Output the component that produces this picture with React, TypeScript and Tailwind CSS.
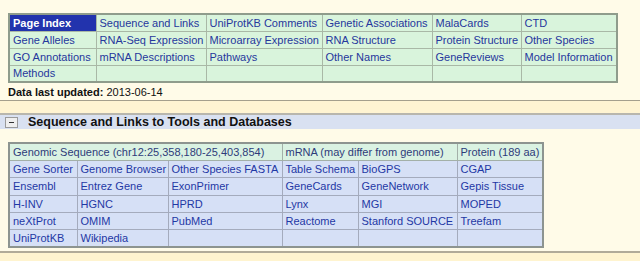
import React from "react";

const indexRows: string[][] = [
    ["Page Index", "Sequence and Links", "UniProtKB Comments", "Genetic Associations", "MalaCards", "CTD"],
    ["Gene Alleles", "RNA-Seq Expression", "Microarray Expression", "RNA Structure", "Protein Structure", "Other Species"],
    ["GO Annotations", "mRNA Descriptions", "Pathways", "Other Names", "GeneReviews", "Model Information"],
    ["Methods", "", "", "", "", ""],
];

const indexCols = [87, 110, 116, 110, 89, 96];

const linkRows: string[][] = [
    ["Gene Sorter", "Genome Browser", "Other Species FASTA", "Table Schema", "BioGPS", "CGAP"],
    ["Ensembl", "Entrez Gene", "ExonPrimer", "GeneCards", "GeneNetwork", "Gepis Tissue"],
    ["H-INV", "HGNC", "HPRD", "Lynx", "MGI", "MOPED"],
    ["neXtProt", "OMIM", "PubMed", "Reactome", "Stanford SOURCE", "Treefam"],
    ["UniProtKB", "Wikipedia", "", "", "", ""],
];

const linkCols = [68, 91, 114, 76, 99, 86];

export default function App() {
    return (
        <div className="w-[640px] h-[261px] overflow-hidden bg-[#fffbe8] text-[11px] leading-[14px]" style={{ fontFamily: '"Liberation Sans", Arial, sans-serif' }}>
            <div className="pt-[13px] px-[8px]">
                <table className="table-fixed border-collapse border-2 border-[#8f9c8c]" style={{ width: 608 }}>
                    <colgroup>
                        {indexCols.map((w, i) => <col key={i} style={{ width: w }} />)}
                    </colgroup>
                    <tbody>
                        {indexRows.map((row, r) => (
                            <tr key={r} className="h-[17px]">
                                {row.map((cell, c) => {
                                    const active = r === 0 && c === 0;
                                    return (
                                        <td key={c} className={active
                                            ? "border border-[#a9b8a6] bg-[#2233ad] text-white font-bold px-[3px] whitespace-nowrap"
                                            : "border border-[#a9b8a6] bg-[#d9f4dc] text-[#26379c] px-[3px] whitespace-nowrap"}>
                                            {cell}
                                        </td>
                                    );
                                })}
                            </tr>
                        ))}
                    </tbody>
                </table>
                <div className="mt-[2px] h-[15px] leading-[15px] text-[#111]">
                    <span className="font-bold">Data last updated:</span> 2013-06-14
                </div>
            </div>
            <div className="border-t border-[#a59f8c] bg-[#fff4d2] h-[13px]" />
            <div className="border-t-2 border-[#b8b6ad] bg-[#d9e1f1] h-[16px] flex items-center">
                <div className="ml-[5px] w-[13px] h-[11px] border border-[#9a9a9a] bg-[#eeeeee] flex items-center justify-center">
                    <div className="w-[5px] h-[1px] bg-[#333]" />
                </div>
                <div className="ml-[10px] font-bold text-[12.5px] text-[#111]">Sequence and Links to Tools and Databases</div>
            </div>
            <div className="pt-[13px] px-[8px] h-[122px]">
                <table className="table-fixed border-collapse border-2 border-[#8d9490]" style={{ width: 534 }}>
                    <colgroup>
                        {linkCols.map((w, i) => <col key={i} style={{ width: w }} />)}
                    </colgroup>
                    <tbody>
                        <tr className="h-[17.4px] bg-[#daf2e2] text-[#2e3b7a]">
                            <td colSpan={3} className="border border-[#a3b0a8] px-[3px] whitespace-nowrap">Genomic Sequence (chr12:25,358,180-25,403,854)</td>
                            <td colSpan={2} className="border border-[#a3b0a8] px-[3px] whitespace-nowrap">mRNA (may differ from genome)</td>
                            <td className="border border-[#a3b0a8] px-[3px] whitespace-nowrap">Protein (189 aa)</td>
                        </tr>
                        {linkRows.map((row, r) => (
                            <tr key={r} className="h-[17.4px] bg-[#d6e0f6] text-[#1f38a5]">
                                {row.map((cell, c) => (
                                    <td key={c} className="border border-[#a4abbd] px-[3px] whitespace-nowrap">{cell}</td>
                                ))}
                            </tr>
                        ))}
                    </tbody>
                </table>
            </div>
            <div className="border-t-2 border-[#b1ab98] bg-[#fff4cf] h-[20px]" />
        </div>
    );
}
